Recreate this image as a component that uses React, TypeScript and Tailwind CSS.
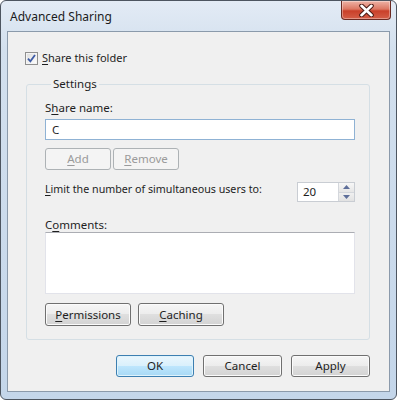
import React from "react";

const font = { fontFamily: '"Noto Sans", "Open Sans", sans-serif' };

function U({ children }: { children: React.ReactNode }) {
  return <span className="underline underline-offset-[2px] decoration-[1px]">{children}</span>;
}

function Button({
  children,
  kind = "normal",
  className = "",
}: {
  children: React.ReactNode;
  kind?: "normal" | "primary" | "disabled";
  className?: string;
}) {
  const look =
    kind === "primary"
      ? "border-[#3c7fb1] bg-[linear-gradient(to_bottom,#eaf6fd_0%,#d9f0fc_50%,#bee6fd_50%,#a7d9f5_100%)] text-[#1e1e1e] shadow-[inset_0_0_0_1px_#dff3fc]"
      : kind === "disabled"
      ? "border-[#adb2b5] bg-[#f4f4f4] text-[#9a9a9a]"
      : "border-[#707070] bg-[linear-gradient(to_bottom,#f6f6f6_0%,#ececec_50%,#dfdfdf_50%,#d3d3d3_100%)] text-[#1e1e1e] shadow-[inset_0_0_0_1px_#fbfbfb]";
  return (
    <div
      className={`flex h-[22px] items-center justify-center rounded-[3px] border text-[11.5px] leading-4 ${look} ${className}`}
    >
      {children}
    </div>
  );
}

function CloseButton() {
  return (
    <div className="flex h-[19px] w-[50px] items-center justify-center rounded-b-[4px] border border-t-0 border-[#6b2a22] bg-[linear-gradient(to_bottom,#eeb3a6_0%,#dc7763_45%,#c9402a_55%,#d45e47_100%)] shadow-[inset_0_0_0_1px_rgba(255,255,255,0.35)]">
      <svg width="15" height="13" viewBox="0 0 15 13">
        <path d="M2.5 1.8 L12.5 11.2 M12.5 1.8 L2.5 11.2" stroke="#4a1a14" strokeWidth="4.6" strokeLinecap="round" />
        <path d="M2.5 1.8 L12.5 11.2 M12.5 1.8 L2.5 11.2" stroke="#ffffff" strokeWidth="2.6" strokeLinecap="round" />
      </svg>
    </div>
  );
}

function Checkbox() {
  return (
    <div className="flex h-[13px] w-[13px] items-center justify-center border border-[#8f8f8f] bg-[linear-gradient(to_bottom_right,#dcdcdc,#ffffff)] shadow-[inset_0_0_0_1px_#f4f4f4]">
      <svg width="9" height="9" viewBox="0 0 9 9">
        <path d="M1 4.6 L3.4 7.4 L8 1" fill="none" stroke="#3e5ca6" strokeWidth="1.8" />
      </svg>
    </div>
  );
}

function Spinner() {
  return (
    <div className="flex h-[20px] w-[58px] border border-[#c9cdd3] bg-white">
      <div className="flex flex-1 items-center pl-[5px] text-[11.5px] leading-4">20</div>
      <div className="flex w-[16px] flex-col border-l border-[#d4d7dc]">
        <div className="flex flex-1 items-center justify-center border-b border-[#d4d7dc] bg-[linear-gradient(to_bottom,#f7f7f7,#e6e6e6)]">
          <svg width="7" height="4" viewBox="0 0 7 4">
            <path d="M0 4 L3.5 0 L7 4 Z" fill="#5e6f9a" />
          </svg>
        </div>
        <div className="flex flex-1 items-center justify-center bg-[linear-gradient(to_bottom,#f0f0f0,#e2e2e2)]">
          <svg width="7" height="4" viewBox="0 0 7 4">
            <path d="M0 0 L3.5 4 L7 0 Z" fill="#5e6f9a" />
          </svg>
        </div>
      </div>
    </div>
  );
}

export default function App() {
  return (
    <div className="h-[400px] w-[397px] bg-white text-[#1e1e1e]" style={font}>
      <div className="flex h-full w-full flex-col rounded-[6px] border border-[#4d5560] bg-[linear-gradient(to_bottom,#e3ebf5_0%,#d3e0ee_12%,#c4d6ea_100%)]">
        {/* title bar */}
        <div className="flex h-[30px] items-start justify-between pl-[9px] pr-[5px]">
          <div className="mt-[8px] text-[12px] leading-4 text-[#1b1b1b]">Advanced Sharing</div>
          <CloseButton />
        </div>

        {/* client area */}
        <div className="mx-[6px] flex flex-1 flex-col border border-[#8b9aab] bg-[#f0f0f0] pl-[17px] pr-[19px] pt-[20px]">
          <div className="flex h-[12px] items-center gap-[4px]">
            <Checkbox />
            <span className="text-[11px] leading-4">
              <U>S</U>hare this folder
            </span>
          </div>

          <fieldset className="ml-[1px] mt-[12px] h-[264px] rounded-[3px] border border-[#d5dfe5] px-[18px] pb-[12px]">
            <legend className="ml-[6px] px-[2px] text-[11.5px] leading-4">Settings</legend>
            <div className="mt-[8px] text-[11.5px] leading-4">
              S<U>h</U>are name:
            </div>
            <div className="mr-[-4px] mt-[3px] flex h-[21px] items-center border border-[#8fb2d4] bg-white pl-[6px] text-[11.5px] leading-4">
              C
            </div>
            <div className="mt-[8px] flex gap-[2px]">
              <Button kind="disabled" className="w-[66px]">
                <U>A</U>dd
              </Button>
              <Button kind="disabled" className="w-[66px]">
                <U>R</U>emove
              </Button>
            </div>
            <div className="mr-[-4px] mt-[11px] flex items-start justify-between">
              <span className="text-[10.7px] leading-4">
                <U>L</U>imit the number of simultaneous users to:
              </span>
              <div className="mt-[1px]">
                <Spinner />
              </div>
            </div>
            <div className="mt-[15px] text-[11.5px] leading-4">
              C<U>o</U>mments:
            </div>
            <div className="mr-[-4px] mt-[-1px] h-[62px] border border-[#e2e3ea] border-t-[#abadb3] bg-white" />
            <div className="mt-[9px] flex gap-[7px]">
              <Button className="h-[23px] w-[86px]">
                <U>P</U>ermissions
              </Button>
              <Button className="h-[23px] w-[86px]">
                <U>C</U>aching
              </Button>
            </div>
          </fieldset>

          <div className="mt-[15px] flex justify-end gap-[9px] pr-0">
            <Button kind="primary" className="w-[78px]">
              OK
            </Button>
            <Button className="w-[79px]">Cancel</Button>
            <Button className="w-[79px]">Apply</Button>
          </div>
        </div>
        <div className="h-[7px]" />
      </div>
    </div>
  );
}
